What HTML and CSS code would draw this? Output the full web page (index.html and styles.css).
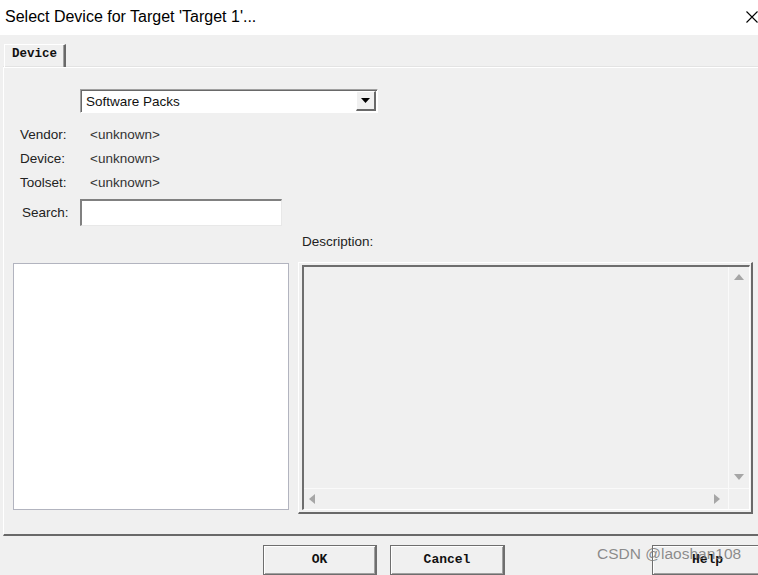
FILE: index.html
```html
<!DOCTYPE html>
<html lang="en">
<head>
    <meta charset="UTF-8">
    <title>Select Device for Target 'Target 1'...</title>
    <link rel="stylesheet" href="styles.css">
</head>
<body>
    <div class="titlebar">
        <span class="title">Select Device for Target 'Target 1'...</span>
        <svg class="close" width="12" height="12" viewBox="0 0 12 12">
            <path d="M0.5 0.5 L11.5 11.5 M11.5 0.5 L0.5 11.5" stroke="#000" stroke-width="1.1" fill="none"/>
        </svg>
    </div>

    <div class="client">
        <div class="tabs">
            <div class="tab">Device</div>
        </div>

        <div class="panel">
            <div class="select">
                <span class="select-text">Software Packs</span>
                <div class="select-btn">
                    <svg width="9" height="5" viewBox="0 0 9 5"><path d="M0 0 H9 L4.5 5 Z" fill="#000"/></svg>
                </div>
            </div>

            <div class="info">
                <span class="label">Vendor:</span><span class="value">&lt;unknown&gt;</span>
                <span class="label">Device:</span><span class="value">&lt;unknown&gt;</span>
                <span class="label">Toolset:</span><span class="value">&lt;unknown&gt;</span>
            </div>

            <div class="search-row">
                <label for="search">Search:</label>
                <input type="text" id="search" class="search">
            </div>

            <div class="boxes">
                <div></div>
                <div class="desc-label">Description:</div>
                <div class="list"></div>
                <div class="desc">
                    <div class="desc-inner">
                        <div class="desc-content"></div>
                        <div class="vscroll">
                            <span class="arrow up"></span>
                            <span class="arrow down"></span>
                        </div>
                        <div class="hscroll">
                            <span class="arrow left"></span>
                            <span class="arrow right"></span>
                        </div>
                        <div class="corner"></div>
                    </div>
                </div>
            </div>
        </div>

        <div class="buttons">
            <button class="btn btn-ok">OK</button>
            <button class="btn btn-cancel">Cancel</button>
            <button class="btn btn-help">Help</button>
            <span class="watermark">CSDN @laoshan108</span>
        </div>
    </div>
</body>
</html>
```

FILE: styles.css
```css
* {
    margin: 0;
    padding: 0;
    box-sizing: border-box;
}

body {
    width: 758px;
    height: 575px;
    overflow: hidden;
    background-color: #f0f0f0;
    font-family: "Liberation Sans", Arial, sans-serif;
    font-size: 13.5px;
    color: #222;
}

.titlebar {
    height: 35px;
    background: #ffffff;
    display: flex;
    align-items: center;
    justify-content: space-between;
    padding: 0 0 2px 5px;
}

.title {
    font-size: 16px;
    color: #000;
}

.close {
    margin-top: 1px;
}

.client {
    position: relative;
    padding: 9px 0 0 3px;
    height: 540px;
    overflow: hidden;
}

.tabs {
    height: 23px;
    display: flex;
}

.tab {
    margin-left: 1px;
    width: 62px;
    height: 23px;
    border-top: 1px solid #ffffff;
    border-left: 1px solid #ffffff;
    border-right: 2px solid #696969;
    box-shadow: inset -1px 0 #a0a0a0;
    font-family: "Liberation Mono", "Courier New", monospace;
    font-weight: bold;
    font-size: 12.5px;
    text-align: center;
    line-height: 19px;
    color: #111;
}

.panel {
    height: 469px;
    margin-right: -10px;
    border-top: 1px solid #ffffff;
    border-left: 1px solid #ffffff;
    border-bottom: 2px solid #696969;
    box-shadow: 0 -1px #e3e3e3;
    padding-top: 21px;
}

.select {
    margin-left: 76px;
    width: 298px;
    height: 24px;
    background: #ffffff;
    border-top: 1px solid #a0a0a0;
    border-left: 1px solid #a0a0a0;
    border-right: 1px solid #ffffff;
    border-bottom: 1px solid #ffffff;
    box-shadow: inset 1px 1px #696969;
    display: flex;
    align-items: center;
    justify-content: space-between;
    padding: 0 1px 0 5px;
}

.select-text {
    color: #111;
}

.select-btn {
    width: 20px;
    height: 20px;
    background: #f0f0f0;
    border-top: 1px solid #ffffff;
    border-left: 1px solid #ffffff;
    border-right: 2px solid #696969;
    border-bottom: 2px solid #696969;
    display: flex;
    align-items: center;
    justify-content: center;
}

.info {
    margin-top: 9px;
    padding-left: 16px;
    display: grid;
    grid-template-columns: 70px auto;
    grid-auto-rows: 24px;
    align-items: center;
}

.info .value {
    color: #333;
}

.search-row {
    margin-top: 5px;
    display: flex;
    align-items: center;
    padding-left: 18px;
}

.search-row label {
    width: 58px;
}

.search {
    width: 202px;
    height: 27px;
    background: #ffffff;
    border: none;
    border-top: 2px solid #808080;
    border-left: 2px solid #808080;
    border-right: 1px solid #e8e8e8;
    border-bottom: 1px solid #e8e8e8;
    outline: none;
}

.boxes {
    margin-left: 9px;
    display: grid;
    grid-template-columns: 276px 455px;
    grid-template-rows: 36px auto;
    column-gap: 9px;
}

.desc-label {
    padding: 7px 0 0 4px;
    line-height: 18px;
}

.list {
    margin-top: 1px;
    height: 247px;
    background: #ffffff;
    border: 1px solid #b2b4bf;
}

.desc {
    height: 252px;
    border-top: 1px solid #ffffff;
    border-left: 1px solid #ffffff;
    border-right: 2px solid #696969;
    border-bottom: 2px solid #696969;
    padding: 2px 1px 2px 3px;
}

.desc-inner {
    height: 100%;
    border-top: 2px solid #6e6e6e;
    border-left: 2px solid #6e6e6e;
    border-right: 1px solid #ffffff;
    border-bottom: 1px solid #ffffff;
    display: grid;
    grid-template-columns: 1fr 21px;
    grid-template-rows: 1fr 21px;
}

.vscroll {
    border-left: 1px solid #fafafa;
    display: flex;
    flex-direction: column;
    justify-content: space-between;
    align-items: center;
    padding: 7px 0 8px;
}

.hscroll {
    border-top: 1px solid #fafafa;
    display: flex;
    justify-content: space-between;
    align-items: center;
    padding: 0 8px 0 5px;
}

.corner {
    border-top: 1px solid #fafafa;
    border-left: 1px solid #fafafa;
}

.arrow {
    width: 0;
    height: 0;
    border: 5px solid transparent;
}

.arrow.up {
    border-top-width: 0;
    border-bottom: 6px solid #a6a6a6;
}

.arrow.down {
    border-bottom-width: 0;
    border-top: 6px solid #a6a6a6;
}

.arrow.left {
    border-left-width: 0;
    border-right: 6px solid #a6a6a6;
}

.arrow.right {
    border-right-width: 0;
    border-left: 6px solid #a6a6a6;
}

.buttons {
    padding-top: 9px;
    display: flex;
}

.btn {
    flex: none;
    height: 31px;
    background: #f0f0f0;
    border: 1px solid #6e6e6e;
    border-right-width: 2px;
    border-bottom-width: 2px;
    box-shadow: inset 1px 1px #ffffff, inset -1px -1px #a0a0a0;
    font-family: "Liberation Mono", "Courier New", monospace;
    font-weight: bold;
    font-size: 13px;
    color: #111;
    padding-bottom: 2px;
}

.btn-ok {
    margin-left: 260px;
    width: 114px;
}

.btn-cancel {
    margin-left: 13px;
    width: 115px;
}

.btn-help {
    margin-left: 147px;
    width: 112px;
}

.watermark {
    position: absolute;
    left: 597px;
    top: 510px;
    font-size: 15.5px;
    color: rgba(120, 120, 120, 0.85);
    pointer-events: none;
}
```
